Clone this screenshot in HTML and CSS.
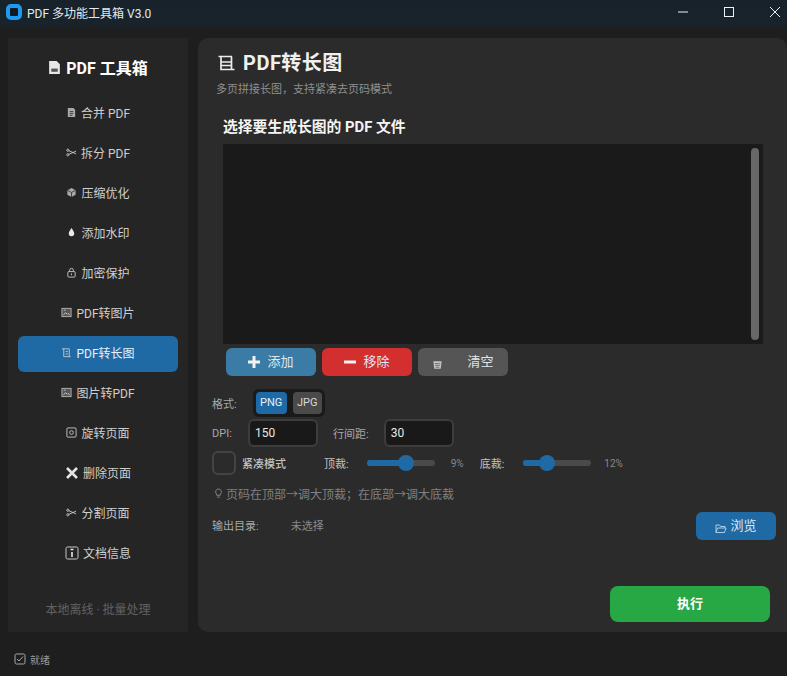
FILE: index.html
```html
<!DOCTYPE html>
<html lang="zh-CN">
<head>
    <meta charset="UTF-8">
    <title>PDF 多功能工具箱 V3.0</title>
    <link rel="stylesheet" href="styles.css">
</head>
<body>
    <header class="titlebar">
        <div class="app-logo"></div>
        <span class="app-name">PDF 多功能工具箱 V3.0</span>
        <div class="win-controls">
            <svg class="win-btn" viewBox="0 0 12 12"><path d="M1 6h10" /></svg>
            <svg class="win-btn" viewBox="0 0 12 12"><rect x="1.5" y="1.5" width="9" height="9" /></svg>
            <svg class="win-btn" viewBox="0 0 12 12"><path d="M1 1l10 10M11 1L1 11" /></svg>
        </div>
    </header>

    <div class="workspace">
        <aside class="sidebar">
            <div class="side-title">
                <svg class="ico ico-lg" viewBox="0 0 12 14"><path class="fill-light" d="M1 1h7l3 3v9H1z" /><path class="fill-dark" d="M3 8h6v3H3z" /></svg>
                <span>PDF 工具箱</span>
            </div>
            <nav class="nav">
                <a class="nav-item">
                    <svg class="ico" viewBox="0 0 12 12"><path class="fill-mid" d="M2 1h6l2 2v8H2z" /><path class="line-dark" d="M4 5h4M4 7h4M4 9h3" /></svg>
                    <span>合并 PDF</span>
                </a>
                <a class="nav-item">
                    <svg class="ico" viewBox="0 0 12 12"><circle class="line-light" cx="2" cy="3.5" r="1.2" /><circle class="line-light" cx="2" cy="8.5" r="1.2" /><path class="line-light" d="M3 4l8 3.5M3 8l8-3.5" /></svg>
                    <span>拆分 PDF</span>
                </a>
                <a class="nav-item">
                    <svg class="ico" viewBox="0 0 12 12"><path class="fill-mid" d="M6 1l4.5 2.5v5L6 11 1.500 8.500v-5z" /><path class="line-dark" d="M1.500 3.500L6 6l4.500-2.500M6 6v5" /></svg>
                    <span>压缩优化</span>
                </a>
                <a class="nav-item">
                    <svg class="ico" viewBox="0 0 12 12"><path class="fill-light" d="M6 1c1.500 2.500 3 4 3 6a3 3 0 0 1-6 0c0-2 1.500-3.500 3-6z" /></svg>
                    <span>添加水印</span>
                </a>
                <a class="nav-item">
                    <svg class="ico" viewBox="0 0 12 12"><rect class="line-light" x="2" y="5" width="8" height="6" rx="1" /><path class="line-light" d="M4 5V3.500a2 2 0 0 1 4 0V5M6 7v2" /></svg>
                    <span>加密保护</span>
                </a>
                <a class="nav-item">
                    <svg class="ico" viewBox="0 0 12 12"><rect class="fill-dim" x="1" y="1.500" width="10" height="9" /><path class="line-light" d="M2.500 9l2.500-3 2 2 1-1 1.500 2M3 3.500h2" /></svg>
                    <span>PDF转图片</span>
                </a>
                <a class="nav-item nav-active">
                    <svg class="ico" viewBox="0 0 12 12"><path class="line-light" d="M1 2h8v9M3 2v8.500h7.500M5 5h2.500M5 7.500h2.500" /></svg>
                    <span>PDF转长图</span>
                </a>
                <a class="nav-item">
                    <svg class="ico" viewBox="0 0 12 12"><rect class="fill-dim" x="1" y="1.500" width="10" height="9" /><path class="line-light" d="M2.500 9l2.500-3 2 2 1-1 1.500 2M3 3.500h2" /></svg>
                    <span>图片转PDF</span>
                </a>
                <a class="nav-item">
                    <svg class="ico" viewBox="0 0 12 12"><rect class="line-light" x="1" y="1" width="10" height="10" rx="1" /><circle class="line-light" cx="6" cy="6" r="2" /></svg>
                    <span>旋转页面</span>
                </a>
                <a class="nav-item">
                    <svg class="ico ico-md" viewBox="0 0 14 14"><path class="line-x" d="M2 2l10 10M12 2L2 12" /></svg>
                    <span>删除页面</span>
                </a>
                <a class="nav-item">
                    <svg class="ico" viewBox="0 0 12 12"><circle class="line-light" cx="2" cy="3.500" r="1.200" /><circle class="line-light" cx="2" cy="8.500" r="1.200" /><path class="line-light" d="M3 4l8 3.500M3 8l8-3.500" /></svg>
                    <span>分割页面</span>
                </a>
                <a class="nav-item">
                    <svg class="ico ico-md" viewBox="0 0 14 14"><rect class="line-light" x="1" y="1" width="12" height="12" rx="1.500" /><path class="line-info" d="M7 6v5M5.500 3.500h3" /></svg>
                    <span>文档信息</span>
                </a>
            </nav>
            <div class="side-foot">本地离线 · 批量处理</div>
        </aside>

        <main class="panel">
            <div class="page-head">
                <svg class="ico-head" viewBox="0 0 17 16"><path d="M0.500 1.500H14M3 1.500V14.500H16.500M13.500 1.500V14M3 7H13.500M3 10.500H13.500" /></svg>
                <h1>PDF转长图</h1>
            </div>
            <p class="page-sub">多页拼接长图，支持紧凑去页码模式</p>

            <h2 class="section-title">选择要生成长图的 PDF 文件</h2>
            <div class="file-list">
                <div class="scroll-thumb"></div>
            </div>
            <div class="list-actions">
                <button class="btn btn-add"><svg class="btn-ico" viewBox="0 0 12 12"><path d="M6 0v12M0 6h12" /></svg>添加</button>
                <button class="btn btn-remove"><svg class="btn-ico" viewBox="0 0 12 12"><path d="M0 6h12" /></svg>移除</button>
                <button class="btn btn-clear">
                    <svg class="trash-ico" viewBox="0 0 12 12"><path d="M1.500 2.500h9l-1 8h-7z" /><path class="trash-lines" d="M3 5h6M3.500 7h5M4 9h4" /></svg>
                    <span>清空</span>
                </button>
            </div>

            <div class="row row-format">
                <span class="lbl">格式:</span>
                <div class="segmented">
                    <span class="seg seg-on">PNG</span>
                    <span class="seg">JPG</span>
                </div>
            </div>

            <div class="row row-dpi">
                <span class="lbl lbl-dpi">DPI:</span>
                <input class="num" type="text" value="150">
                <span class="lbl lbl-gap">行间距:</span>
                <input class="num" type="text" value="30">
            </div>

            <div class="row row-compact">
                <span class="check"></span>
                <span class="lbl lbl-bright compact-lbl">紧凑模式</span>
                <span class="lbl lbl-bright top-lbl">顶裁:</span>
                <div class="slider">
                    <div class="slider-fill" style="width: 39px"></div>
                    <div class="slider-knob" style="left: 31px"></div>
                </div>
                <span class="pct pct-top">9%</span>
                <span class="lbl lbl-bright">底裁:</span>
                <div class="slider slider-b">
                    <div class="slider-fill" style="width: 24px"></div>
                    <div class="slider-knob" style="left: 16px"></div>
                </div>
                <span class="pct">12%</span>
            </div>

            <p class="tip">
                <svg class="tip-ico" viewBox="0 0 10 12"><path d="M5 1a3.200 3.200 0 0 0-2 5.700V8h4V6.700A3.200 3.200 0 0 0 5 1zM3.500 10h3" /></svg>
                页码在顶部→调大顶裁；在底部→调大底裁
            </p>

            <div class="row row-output">
                <span class="lbl out-lbl">输出目录:</span>
                <span class="lbl out-lbl out-path">未选择</span>
                <button class="btn btn-browse">
                    <svg class="folder-ico" viewBox="0 0 12 11"><path d="M1 9.500V2h3.500l1 1.500H10v1.500M1 9.500h8.500L11 5H2.500z" /></svg>
                    浏览
                </button>
            </div>

            <div class="run-wrap">
                <button class="btn btn-run">执行</button>
            </div>
        </main>
    </div>

    <footer class="statusbar">
        <svg class="status-ico" viewBox="0 0 12 12"><rect x="1" y="1" width="10" height="10" rx="1.500" /><path d="M3 6l2 2 4-4.500" /></svg>
        <span>就绪</span>
    </footer>
</body>
</html>
```

FILE: styles.css
```css
* {
    box-sizing: border-box;
}
html, body {
    height: 100%;
}
body {
    margin: 0;
    width: 787px;
    height: 676px;
    overflow: hidden;
    display: flex;
    flex-direction: column;
    background-color: #1e1e1e;
    color: #dce4ee;
    font-family: Roboto, "Noto Sans CJK SC", sans-serif;
}

/* title bar */
.titlebar {
    height: 38px;
    flex: none;
    padding: 0 0 14px 6px;
    display: flex;
    align-items: center;
    background: linear-gradient(to bottom, #17222b 0, #18232b 24px, #1e1e1e 30px);
}
.app-logo {
    width: 16px;
    height: 16px;
    border: 4px solid #1e9bf0;
    border-radius: 5px;
    background-color: #0d1a24;
}
.app-name {
    margin-left: 5px;
    font-size: 12px;
    color: #e4e8ec;
}
.win-controls {
    margin-left: auto;
    display: flex;
    gap: 34px;
    padding-right: 6px;
}
.win-btn {
    width: 12px;
    height: 12px;
    fill: none;
    stroke: #f0f0f0;
    stroke-width: 1;
}

/* layout */
.workspace {
    height: 594px;
    flex: none;
    display: flex;
    gap: 10px;
    padding-left: 8px;
}
.statusbar {
    flex: 1;
    display: flex;
    align-items: center;
    gap: 4px;
    padding: 10px 0 0 14px;
    font-size: 10px;
    color: #9a9a9a;
}
.status-ico {
    width: 12px;
    height: 12px;
    fill: none;
    stroke: #a8a8a8;
    stroke-width: 1;
}

/* sidebar */
.sidebar {
    width: 180px;
    display: flex;
    flex-direction: column;
    background-color: #252525;
}
.side-title {
    height: 58px;
    display: flex;
    align-items: center;
    justify-content: center;
    gap: 5px;
    font-size: 16px;
    font-weight: 700;
    color: #fff;
}
.nav {
    display: flex;
    flex-direction: column;
    gap: 4px;
    padding: 0 10px;
}
.nav-item {
    height: 36px;
    padding-bottom: 3px;
    display: flex;
    align-items: center;
    justify-content: center;
    gap: 4px;
    border-radius: 6px;
    font-size: 12px;
    color: #cfcfcf;
}
.nav-active {
    background-color: #1f6aa5;
    color: #e6f0f8;
}
.side-foot {
    margin-top: auto;
    padding-bottom: 15px;
    text-align: center;
    font-size: 12px;
    color: #626262;
}

/* small icons */
.ico {
    width: 11px;
    height: 11px;
    flex: none;
}
.ico-lg {
    width: 13px;
    height: 15px;
}
.ico-md {
    width: 14px;
    height: 14px;
}
.fill-light {
    fill: #e8e8e8;
}
.fill-mid {
    fill: #a9a9a9;
}
.fill-dim {
    fill: #555;
    stroke: #b4b4b4;
    stroke-width: 1;
}
.fill-dark {
    fill: #555;
}
.line-dark {
    fill: none;
    stroke: #3a3a3a;
    stroke-width: 1;
}
.line-light {
    fill: none;
    stroke: #c8c8c8;
    stroke-width: 1;
}
.line-x {
    fill: none;
    stroke: #e4e4e4;
    stroke-width: 2.600;
}
.line-info {
    fill: none;
    stroke: #e4e4e4;
    stroke-width: 1.600;
}

/* main panel */
.panel {
    width: 589px;
    padding: 0 11px 0 14px;
    display: flex;
    flex-direction: column;
    background-color: #2b2b2b;
    border-radius: 10px 10px 0 10px;
}
.page-head {
    margin: 9px 0 0 6px;
    height: 28px;
    display: flex;
    align-items: center;
    gap: 8px;
}
.ico-head {
    width: 17px;
    height: 16px;
    margin-top: 4px;
    fill: none;
    stroke: #ececec;
    stroke-width: 1.700;
}
.page-head h1 {
    margin: 0;
    font-size: 20px;
    font-weight: 700;
    letter-spacing: 0.5px;
    color: #f0f0f0;
}
.page-sub {
    margin: 7px 0 0 4px;
    height: 16px;
    line-height: 16px;
    font-size: 11px;
    color: #8f8f8f;
}
.section-title {
    margin: 18px 0 0 11px;
    height: 22px;
    line-height: 22px;
    font-size: 14.800px;
    font-weight: 700;
    color: #f4f4f4;
}
.file-list {
    margin: 6px 0 0 11px;
    width: 540px;
    height: 200px;
    flex: none;
    padding: 4px 4px 4px 0;
    display: flex;
    justify-content: flex-end;
    background-color: #1a1a1a;
}
.scroll-thumb {
    width: 8px;
    height: 100%;
    border-radius: 4px;
    background-color: #686868;
}
.list-actions {
    margin: 4px 0 0 14px;
    display: flex;
    gap: 6px;
}

/* buttons */
.btn {
    height: 28px;
    width: 90px;
    padding: 0 0 4px;
    border: none;
    border-radius: 6px;
    display: flex;
    align-items: center;
    justify-content: center;
    gap: 7px;
    font-family: inherit;
    font-size: 13px;
    color: #dfe6ec;
}
.btn-add {
    background-color: #3a7ca5;
}
.btn-remove {
    background-color: #d32f2f;
}
.btn-clear {
    background-color: #555;
    gap: 24px;
    padding-right: 0;
}
.btn-ico {
    width: 12px;
    height: 12px;
    margin-top: 4px;
    fill: none;
    stroke: #f2f2f2;
    stroke-width: 3;
}
.trash-ico {
    width: 11px;
    height: 11px;
    margin-top: 8px;
    fill: #c4c4c4;
}
.trash-lines {
    fill: none;
    stroke: #555;
    stroke-width: 0.800;
}
.btn-browse {
    margin-left: auto;
    width: 80px;
    gap: 3px;
    background-color: #1f6aa5;
}
.folder-ico {
    width: 12px;
    height: 11px;
    margin-top: 8px;
    fill: none;
    stroke: #a9cbe6;
    stroke-width: 1;
}
.btn-run {
    width: 160px;
    height: 36px;
    border-radius: 8px;
    padding-bottom: 3px;
    background-color: #28a745;
    font-weight: 700;
    color: #fff;
}
.run-wrap {
    margin: auto 6px 10px 0;
    display: flex;
    justify-content: flex-end;
}

/* option rows */
.row {
    display: flex;
    align-items: center;
}
.lbl {
    font-size: 11px;
    color: #a8a8a8;
    white-space: nowrap;
}
.lbl-bright {
    color: #c4c4c4;
}
.row-format {
    margin-top: 13px;
}
.segmented {
    margin-left: 16px;
    padding: 3px;
    display: flex;
    gap: 6px;
    background-color: #1a1a1a;
    border-radius: 6px;
}
.seg {
    width: 29px;
    height: 22px;
    line-height: 22px;
    text-align: center;
    font-size: 11px;
    border-radius: 4px;
    background-color: #4a4a4a;
    color: #d8d8d8;
}
.seg-on {
    width: 31px;
    background-color: #1f6aa5;
    color: #e6f0f8;
}
.row-dpi {
    margin-top: 2px;
}
.lbl-dpi {
    width: 17px;
    margin-right: 19px;
}
.lbl-gap {
    margin: 0 15px 0 15px;
}
.num {
    width: 70px;
    height: 28px;
    padding: 0 5px;
    border: 2px solid #3d3d3d;
    border-radius: 6px;
    background-color: #191919;
    font-family: inherit;
    font-size: 12px;
    color: #e8e8e8;
    outline: none;
}
.row-compact {
    margin-top: 2px;
    height: 28px;
}
.check {
    width: 24px;
    height: 24px;
    border: 2px solid #444;
    border-radius: 6px;
}
.compact-lbl {
    margin-left: 6px;
    font-weight: 500;
}
.top-lbl {
    margin-left: 38px;
}
.slider {
    position: relative;
    width: 68px;
    height: 6px;
    margin-left: 18px;
    border-radius: 3px;
    background-color: #4a4a4a;
}
.slider-b {
    margin-left: 19px;
}
.slider-fill {
    height: 100%;
    border-radius: 3px;
    background-color: #1f6aa5;
}
.slider-knob {
    position: absolute;
    top: -5px;
    width: 16px;
    height: 16px;
    border-radius: 50%;
    background-color: #1f6aa5;
}
.pct {
    margin-left: 13px;
    width: 18px;
    font-size: 10px;
    color: #888;
}
.pct-top {
    margin-left: 16px;
    width: 29px;
}
.tip {
    margin: 5px 0 0 2px;
    height: 22px;
    display: flex;
    align-items: center;
    gap: 3px;
    font-size: 12px;
    color: #808080;
}
.tip-ico {
    width: 9px;
    height: 11px;
    fill: none;
    stroke: #8c8c8c;
    stroke-width: 1;
}
.row-output {
    margin-top: 8px;
    height: 28px;
}
.out-lbl {
    padding-bottom: 3px;
}
.out-path {
    margin-left: 32px;
    color: #8a8a8a;
}
```
